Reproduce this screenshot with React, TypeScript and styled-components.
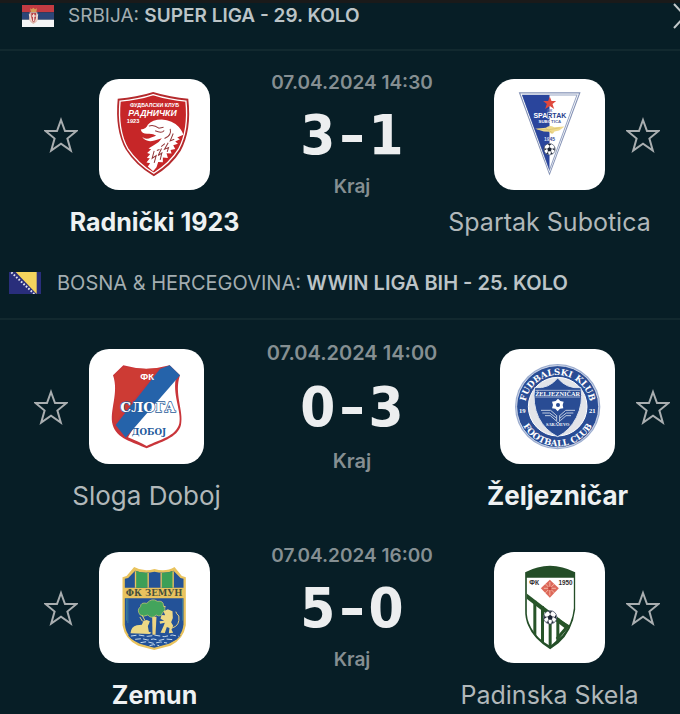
import React from "react";
import styled, { createGlobalStyle } from "styled-components";

const GlobalStyle = createGlobalStyle`
  * { box-sizing: border-box; }
  body {
    margin: 0;
    background: #071e26;
    font-family: Inter, "Liberation Sans", sans-serif;
    color: #eceff0;
  }
`;

const Page = styled.main`
  border-top: 3px solid #1a1a1a;
  overflow: hidden;
`;

const LeagueHeader = styled.header<{ $inset: number; $gap: number; $tall?: boolean }>`
  display: flex;
  align-items: center;
  gap: ${(p) => p.$gap}px;
  padding: ${(p) => (p.$tall ? "34px 0 23px" : "0 0 20px")};
  padding-left: ${(p) => p.$inset}px;
  border-bottom: 2px solid #12292f;
`;

const Flag = styled.svg`
  display: block;
  flex: none;
  width: 32px;
  height: 22px;
`;

const LeagueTitle = styled.h2<{ $large?: boolean }>`
  flex: 1;
  margin: 0;
  font-size: ${(p) => (p.$large ? 20 : 19)}px;
  line-height: 24px;
  font-weight: 400;
  white-space: nowrap;
  color: #a3adb0;

  strong { font-weight: 600; color: #bcc4c7; }
`;

const MoreButton = styled.button`
  flex: none;
  width: 8px;
  height: 26px;
  padding: 0;
  border: 0;
  background: none;
  color: #c2c8ca;
  overflow: hidden;
  cursor: pointer;

  svg { display: block; }
`;

const Match = styled.article<{ $large?: boolean; $top: number }>`
  --crest: ${(p) => (p.$large ? 115 : 111)}px;
  display: grid;
  grid-template-columns: 34px var(--crest) minmax(0, 1fr) var(--crest) 34px;
  column-gap: 21px;
  align-items: start;
  padding: ${(p) => p.$top}px ${(p) => (p.$large ? 10 : 20)}px 0 ${(p) => (p.$large ? 34 : 44)}px;
`;

const StarButton = styled.button`
  height: var(--crest);
  margin-top: 6px;
  padding: 0;
  border: 0;
  background: none;
  color: #a9aeb0;
  cursor: pointer;

  svg { display: block; width: 34px; height: 36px; }
`;

const Team = styled.div`
  display: flex;
  flex-direction: column;
  align-items: center;
  padding-top: 6px;
`;

const CrestTile = styled.div`
  width: var(--crest);
  height: var(--crest);
  border-radius: 20px;
  background: #fff;
  overflow: hidden;

  svg { display: block; width: 100%; height: 100%; }
`;

const TeamName = styled.div<{ $winner?: boolean; $large?: boolean }>`
  margin-top: 17px;
  font-size: ${(p) => (p.$large ? 26 : 25)}px;
  line-height: 30px;
  font-weight: ${(p) => (p.$winner ? 700 : 400)};
  color: ${(p) => (p.$winner ? "#eef1f2" : "#b1b8ba")};
  white-space: nowrap;
`;

const Result = styled.div`
  display: flex;
  flex-direction: column;
  align-items: center;
  justify-content: space-between;
  height: calc(var(--crest) + 13px);
`;

const Meta = styled.div<{ $large?: boolean }>`
  font-size: ${(p) => (p.$large ? 20 : 19)}px;
  line-height: 20px;
  font-weight: 600;
  white-space: nowrap;
  color: #858f92;
`;

const Score = styled.div`
  display: flex;
  gap: 4px;
  font-family: "DejaVu Sans Condensed", "DejaVu Sans", sans-serif;
  font-size: 56px;
  line-height: 56px;
  font-weight: 700;
  color: #eceeef;
`;

const svgFont = { fontFamily: "Liberation Sans", fontWeight: 700 };
const serifFont = { fontFamily: "Liberation Serif", fontWeight: 700 };
const slabFont = { fontFamily: "DejaVu Serif", fontWeight: 700 };

const Ball = ({ x, y, r }: { x: number; y: number; r: number }) => (
  <g transform={`translate(${x} ${y}) scale(${r / 20})`}>
    <circle r="20" fill="#fff" stroke="#26324c" strokeWidth="2" />
    <path d="M0-8L8-2L5 7H-5L-8-2ZM-7-18L7-18L0-12ZM17-8L19 5L12 1ZM13 14L3 19L5 12ZM-13 14L-3 19L-5 12ZM-17-8L-19 5L-12 1Z" fill="#1c2434" />
    <path d="M0-8V-13M8-2L13 0M5 7L7 13M-5 7L-7 13M-8-2L-13 0" stroke="#1c2434" strokeWidth="2" />
  </g>
);

const RadnickiCrest = () => (
  <svg viewBox="28 27 332 332" aria-hidden="true">
    <path d="M84 86Q140 82 190 66Q242 82 295 86Q306 180 272 242Q245 286 192 318Q137 285 108 238Q75 180 84 86Z" fill="#b52a2d" />
    <path d="M91 93Q146 89 190 74Q236 89 288 93Q297 179 266 237Q240 279 192 309Q144 280 114 235Q83 180 91 93Z" fill="#c62628" stroke="#fff" strokeWidth="4" />
    <path d="M157 200Q168 211 184 202L199 197Q191 190 174 191Q156 192 153 178Q170 176 174 164Q187 148 216 148Q248 150 266 170Q278 184 280 194L262 202L270 207L256 214L264 221L250 225L256 236L242 239L245 250L230 249L234 263L219 262L219 276L205 275L200 291L190 303L174 289L181 279L170 277L180 264L171 263L181 251L172 248L184 237L176 235L194 224Q210 214 216 204L194 211Q169 218 157 200Z" fill="#fff" />
    <path d="M177 168Q191 162 207 174L221 171M196 182Q216 191 223 181M224 205Q246 196 241 176M215 235L205 256L216 248L211 269M235 218L224 237L236 232L232 245M193 242L187 264L199 256L193 278M250 190L241 212L253 207M225 220L214 229M209 238L201 241" fill="none" stroke="#923638" strokeWidth="3" />
    <text x="194" y="112" textAnchor="middle" fill="#fff" {...svgFont} fontSize="16">ФУДБАЛСКИ КЛУБ</text>
    <text x="188" y="137" textAnchor="middle" fill="#fff" {...svgFont} fontStyle="italic" fontSize="26">РАДНИЧКИ</text>
    <text x="130" y="158" textAnchor="middle" fill="#fff" {...svgFont} fontSize="17">1923</text>
  </svg>
);

const SpartakCrest = () => (
  <svg viewBox="28 27 332 332" aria-hidden="true">
    <path d="M102 67H287L194 316Z" fill="#8290b4" />
    <path d="M107 70H282L194 308Z" fill="#fff" />
    <path d="M113 75H276L194 299Z" fill="#fff" stroke="#97a5c4" strokeWidth="3" />
    <path d="M112 75H194V300Z" fill="#2a459c" />
    <path d="M195 80L200 93L214 93L203 102L208 117L195 108L181 117L186 102L175 93L190 93Z" fill="#df493e" />
    <text x="194" y="126" textAnchor="middle" fill="#566cad" {...svgFont} fontSize="11">ФК</text>
    <text x="195" y="145" textAnchor="middle" fill="#fff" stroke="#2a459c" strokeWidth="3" paintOrder="stroke" {...svgFont} fontSize="21">
      SPA<tspan fill="#293e8d" stroke="#fff">RTAK</tspan>
    </text>
    <text x="195" y="160" textAnchor="middle" fill="#fff" {...svgFont} fontSize="13">
      SUBO<tspan fill="#4e5f9d">TICA</tspan>
    </text>
    <path d="M151 176L183 173Q193 163 208 171L239 169L223 181L209 184Q202 197 193 185L177 184Z" fill="#efd98c" />
    <path d="M158 177L190 179L225 173M183 175L203 188" fill="none" stroke="#d5bf69" strokeWidth="2" />
    <text x="194" y="211" textAnchor="middle" fill="#d8dff2" {...svgFont} fontSize="15">
      19<tspan fill="#344b98">45</tspan>
    </text>
    <Ball x={194} y={237} r={17} />
  </svg>
);

const SlogaCrest = () => (
  <svg viewBox="27 25 345 345" aria-hidden="true">
    <path d="M99 104L130 74Q199 94 269 74L300 104C281 158 312 211 303 252C294 292 239 304 200 323C160 304 109 294 98 252C87 211 118 157 99 104Z" fill="#c9353a" />
    <path d="M265 84L289 105C275 160 306 212 298 248C288 288 239 297 200 316C182 306 162 298 144 290Z" fill="#fff" />
    <path d="M102 105L131 78Q181 89 237 83L105 246C92 210 118 151 102 105Z" fill="#cd3b34" />
    <path d="M240 85L269 74L300 104L137 291L107 253Z" fill="#2563aa" />
    <text x="201" y="118" textAnchor="middle" fill="#fff" {...svgFont} fontSize="28">ФК</text>
    <text x="204" y="213" textAnchor="middle" fill="#fff" stroke="#285b99" strokeWidth="4" paintOrder="stroke" {...slabFont} fontSize="41">СЛОГА</text>
    <text x="207" y="284" textAnchor="middle" fill="#245a9c" {...slabFont} fontSize="26">ДОБОЈ</text>
  </svg>
);

const ZeljeznicarCrest = () => (
  <svg viewBox="32 25 343 345" aria-hidden="true">
    <defs>
      <path id="zeljo-top" d="M107 215A98 98 0 1 1 301 215" />
      <path id="zeljo-bottom" d="M86 199A118 118 0 0 0 322 199" />
    </defs>
    <circle cx="204" cy="198" r="128" fill="#9cadd0" />
    <circle cx="204" cy="198" r="123" fill="#294c94" stroke="#fff" strokeWidth="2" />
    <circle cx="204" cy="198" r="88" fill="#e2e4e9" stroke="#fff" strokeWidth="3" />
    <path d="M135 141Q178 145 204 112Q230 145 274 141Q281 189 260 231Q240 270 204 288Q167 270 147 231Q128 190 135 141Z" fill="#294c94" stroke="#dce3ef" strokeWidth="3" />
    <path d="M137 149H272M137 169H272" stroke="#d9e1ef" strokeWidth="2" />
    <text x="204" y="166" textAnchor="middle" fill="#fff" {...serifFont} fontSize="19">ŽELJEZNIČAR</text>
    <text fill="#fff" {...slabFont} fontSize="26">
      <textPath href="#zeljo-top" startOffset="50%" textAnchor="middle">FUDBALSKI KLUB</textPath>
    </text>
    <text fill="#fff" {...slabFont} fontSize="26">
      <textPath href="#zeljo-bottom" startOffset="50%" textAnchor="middle">FOOTBALL CLUB</textPath>
    </text>
    <text x="98" y="217" textAnchor="middle" fill="#fff" {...serifFont} fontSize="20">19</text>
    <text x="308" y="217" textAnchor="middle" fill="#fff" {...serifFont} fontSize="20">21</text>
    <path d="M205 174L212 181L222 183L219 193L221 203L211 204L204 212L197 204L187 203L190 193L187 183L198 181Z" fill="#fff" />
    <circle cx="205" cy="193" r="6" fill="#294c94" />
    <path d="M154 209H183L201 225M158 217H180L200 232M166 225H182L199 240M256 209H228L210 225M251 217H230L211 232M244 225H229L212 240M201 224V242L205 247L210 242V224" fill="none" stroke="#c0cce0" strokeWidth="3" />
    <text x="204" y="257" textAnchor="middle" fill="#fff" {...serifFont} fontSize="13">SARAJEVO</text>
  </svg>
);

const ZemunCrest = () => (
  <svg viewBox="27 19 332 333" aria-hidden="true">
    <path d="M97 95L109 91L132 64Q160 80 193 70Q227 80 253 64L275 91L287 95V239Q280 282 241 300L192 313L144 300Q104 282 97 239Z" fill="#e9c35e" />
    <path d="M104 99L114 97L135 75Q160 85 193 78Q224 85 250 75L271 97L280 99V126H104Z" fill="#245396" />
    <path d="M137 76Q156 83 174 81L172 126H137ZM215 81Q234 82 249 76V126H215Z" fill="#3c9f57" />
    <path d="M136 77V126M174 82V126M213 82V126M249 77V126" stroke="#e9c35e" strokeWidth="4" />
    <path d="M104 158H280V236Q276 277 236 294L192 306L149 294Q108 277 104 236Z" fill="#235298" />
    <path d="M109 158V225M113 158V232M277 158V225" stroke="#438e9c" strokeWidth="2" />
    <text x="192" y="152" textAnchor="middle" fill="#46503c" {...slabFont} fontSize="26">ФК ЗЕМУН</text>
    <path d="M186 213H199L196 267H187Z" fill="#eed481" />
    <path d="M149 207Q139 192 151 183Q151 169 170 173Q185 155 202 167Q220 164 220 180Q230 193 217 201Q213 216 198 208Q185 222 173 208Q160 216 149 207Z" fill="#43a45c" stroke="#d6cd72" strokeWidth="2" />
    <path d="M121 263Q123 242 140 239L155 237L160 225L170 223L179 227L176 235L173 241L176 258L184 261L178 265ZM211 219L214 208L225 209L220 197L233 191L247 197L248 217L243 230L249 240L244 252L249 261L236 263L238 247L230 244L224 262L211 261L220 242L224 231L210 234L208 227L222 225Z" fill="#edd986" />
    <path d="M149 214L157 227M156 209L164 224M246 247Q270 240 266 211Q258 204 257 198M220 181L227 184" fill="none" stroke="#ecd279" strokeWidth="3" />
    <path d="M113 269H272L260 281Q246 292 192 304Q139 292 123 279Z" fill="#225198" />
    <path d="M122 271L145 268L171 272L197 269L222 273L246 268L266 272M135 281L155 279L173 283L190 280L208 284L225 280L250 282M151 291L170 288L190 293L211 289L231 292M178 300L190 297L207 300" fill="none" stroke="#c5d9e9" strokeWidth="3" strokeDasharray="17 7" />
  </svg>
);

const PadinskaCrest = () => (
  <svg viewBox="27 19 332 333" aria-hidden="true">
    <defs>
      <clipPath id="padinska-shield">
        <path d="M124 96V192Q124 247 160 283L195 305Q234 279 253 243Q268 215 266 171V96Z" />
      </clipPath>
    </defs>
    <path d="M120 80Q194 41 270 80V192Q262 255 220 293L195 311Q145 280 130 242Q119 219 120 192Z" fill="#244e28" />
    <path d="M125 96H266V188Q261 236 232 269L195 301Q154 277 138 246Q123 220 125 190Z" fill="#fff" />
    <g clipPath="url(#padinska-shield)">
      <path d="M120 140L249 239L245 252L120 156Z" fill="#275429" />
      <path d="M149 165V275M172 182V296M195 200V306M218 218V292" stroke="#275429" strokeWidth="9" />
      <path d="M217 222L248 241L215 280" fill="none" stroke="#275429" strokeWidth="9" />
    </g>
    <text x="147" y="118" textAnchor="middle" fill="#302d2e" {...svgFont} fontSize="20">ФК</text>
    <text x="241" y="118" textAnchor="middle" fill="#302d2e" {...svgFont} fontSize="19">1950</text>
    <path d="M194 102L221 128L194 156L167 128Z" fill="#dd695a" />
    <path d="M181 115L208 142M207 115L180 142M176 128H212M194 109V149" stroke="#f2b3a0" strokeWidth="3" />
    <path d="M189 123H199V133H189Z" fill="#c8493d" />
    <Ball x={195} y={215} r={20} />
  </svg>
);

const SerbianFlag = () => (
  <Flag viewBox="0 0 96 66" aria-hidden="true">
    <path d="M0 0H96V22H0Z" fill="#c33b42" />
    <path d="M0 22H96V44H0Z" fill="#2c4577" />
    <path d="M0 44H96V66H0Z" fill="#f5f5f6" />
    <path d="M24 10L29 13L34 8L39 13L45 10L43 22H27Z" fill="#d69a54" />
    <path d="M23 22H46L48 43Q44 54 34 57Q25 54 21 43Z" fill="#dfb9ad" />
    <path d="M28 24H42V45L35 52L28 45Z" fill="#b94349" />
    <path d="M35 26V49M30 33H41M22 28L29 49M47 28L41 49" stroke="#f1dfd5" strokeWidth="4" />
  </Flag>
);

const BosnianFlag = () => (
  <Flag viewBox="0 0 96 66" aria-hidden="true">
    <path d="M0 0H96V66H0Z" fill="#292e7b" />
    <path d="M20 0H83V66Z" fill="#f4d45d" />
    <path d="M7 1L76 66" stroke="#e5e5ee" strokeWidth="6" strokeDasharray="5 5" />
  </Flag>
);

const FavouriteStar = ({ team }: { team: string }) => (
  <StarButton type="button" aria-label={`Favourite ${team}`}>
    <svg viewBox="0 0 34 36" aria-hidden="true">
      <path d="M17 3L21 14H32.5L23.4 21.5L26.8 33.5L17 26.6L7.2 33.5L10.6 21.5L1.5 14H13Z" fill="none" stroke="currentColor" strokeWidth="2" strokeLinejoin="miter" />
    </svg>
  </StarButton>
);

interface Side {
  name: string;
  goals: number;
  crest: React.ReactNode;
}

interface MatchRowProps {
  date: string;
  home: Side;
  away: Side;
  top: number;
  large?: boolean;
}

const TeamBlock = ({ side, winner, large }: { side: Side; winner: boolean; large?: boolean }) => (
  <Team>
    <CrestTile>{side.crest}</CrestTile>
    <TeamName $winner={winner} $large={large}>{side.name}</TeamName>
  </Team>
);

const MatchRow = ({ date, home, away, top, large }: MatchRowProps) => (
  <Match $large={large} $top={top}>
    <FavouriteStar team={home.name} />
    <TeamBlock side={home} winner={home.goals > away.goals} large={large} />
    <Result>
      <Meta $large={large}>{date}</Meta>
      <Score>
        <span>{home.goals}</span>
        <span>–</span>
        <span>{away.goals}</span>
      </Score>
      <Meta $large={large}>Kraj</Meta>
    </Result>
    <TeamBlock side={away} winner={away.goals > home.goals} large={large} />
    <FavouriteStar team={away.name} />
  </Match>
);

export default function App() {
  return (
    <>
      <GlobalStyle />
      <Page>
        <section>
          <LeagueHeader $inset={22} $gap={14}>
            <SerbianFlag />
            <LeagueTitle>SRBIJA: <strong>SUPER LIGA - 29. KOLO</strong></LeagueTitle>
            <MoreButton type="button" aria-label="Open league">
              <svg width="16" height="26" viewBox="0 0 16 26" aria-hidden="true">
                <path d="M2 1L13 13L2 25" fill="none" stroke="currentColor" strokeWidth="2" />
              </svg>
            </MoreButton>
          </LeagueHeader>
          <MatchRow
            top={22}
            date="07.04.2024 14:30"
            home={{ name: "Radnički 1923", goals: 3, crest: <RadnickiCrest /> }}
            away={{ name: "Spartak Subotica", goals: 1, crest: <SpartakCrest /> }}
          />
        </section>
        <section>
          <LeagueHeader $inset={9} $gap={16} $tall>
            <BosnianFlag />
            <LeagueTitle $large>BOSNA &amp; HERCEGOVINA: <strong>WWIN LIGA BIH - 25. KOLO</strong></LeagueTitle>
          </LeagueHeader>
          <MatchRow
            large
            top={23}
            date="07.04.2024 14:00"
            home={{ name: "Sloga Doboj", goals: 0, crest: <SlogaCrest /> }}
            away={{ name: "Željezničar", goals: 3, crest: <ZeljeznicarCrest /> }}
          />
          <MatchRow
            top={35}
            date="07.04.2024 16:00"
            home={{ name: "Zemun", goals: 5, crest: <ZemunCrest /> }}
            away={{ name: "Padinska Skela", goals: 0, crest: <PadinskaCrest /> }}
          />
        </section>
      </Page>
    </>
  );
}
